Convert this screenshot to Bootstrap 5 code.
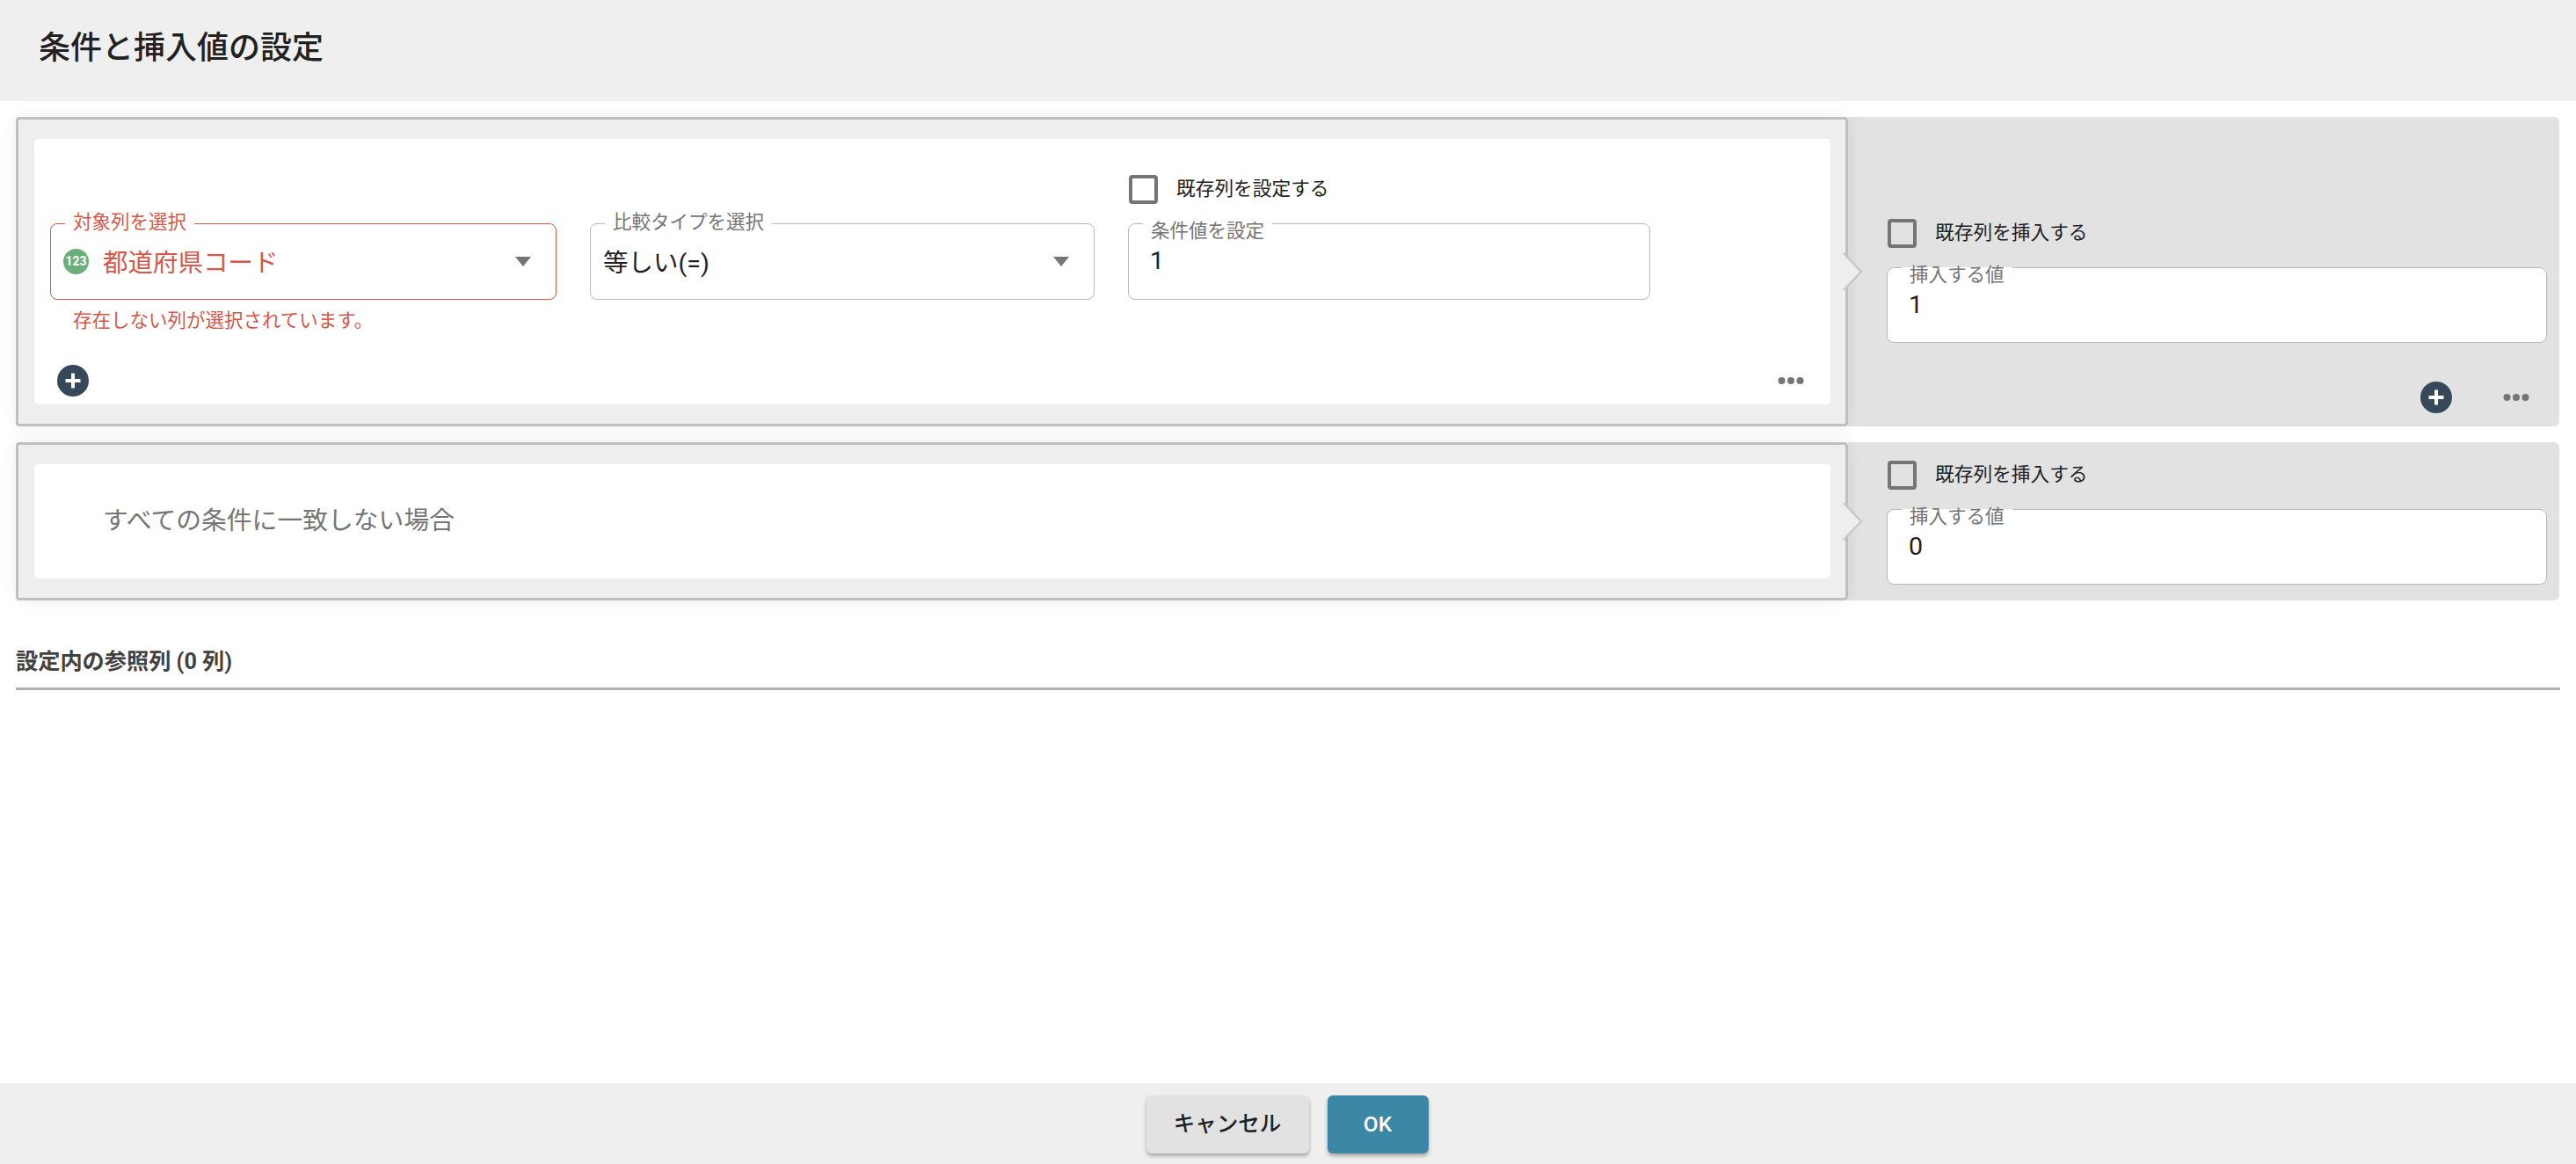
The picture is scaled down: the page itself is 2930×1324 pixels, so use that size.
<!DOCTYPE html>
<html lang="ja">
<head>
  <meta charset="UTF-8">
  <title>条件と挿入値の設定</title>
  <link href="https://cdn.jsdelivr.net/npm/bootstrap@5.3.2/dist/css/bootstrap.min.css" rel="stylesheet">
  <style>
    body {
      font-family: Roboto, "Noto Sans CJK JP", sans-serif;
      color: #212121;
      background: #fff;
    }
    .dlg-head {
      height: 115px;
      padding-left: 44px;
      background: #efefef;
    }
    .dlg-title {
      margin: -5px 0 0;
      font-size: 36px;
      font-weight: 500;
      line-height: 44px;
    }
    .dlg-body {
      padding: 18px 18px 0;
    }
    .rule-row {
      margin-bottom: 18px;
      margin-right: 1px;
    }
    .cond-box {
      position: relative;
      flex: 0 0 2084px;
      padding: 22px 17px 22px 18px;
      background: #eee;
      border: 3px solid #bfbfbf;
      border-radius: 4px;
      box-shadow: 0 0 18px rgba(0, 0, 0, .08);
    }
    .cond-arrow {
      position: absolute;
      left: 100%;
      top: 50%;
      width: 24px;
      height: 44px;
      margin-left: -3px;
      margin-top: -22px;
    }
    .cond-inner {
      height: 100%;
      padding: 41px 30px 9px 18px;
      background: #fff;
      border-radius: 5px;
    }
    .cond-grid {
      display: grid;
      grid-template-columns: 576px 574px 594px;
      column-gap: 38px;
    }
    .chk-line {
      display: flex;
      align-items: center;
      gap: 21px;
      height: 33px;
      font-size: 21.7px;
    }
    .chk-box {
      flex: 0 0 33px;
      height: 33px;
      background: transparent;
      border: 4px solid #757575;
      border-radius: 4px;
    }
    .cond-grid .chk-line {
      grid-column: 3;
      margin-bottom: 22px;
      padding-left: 1px;
    }
    .fld {
      position: relative;
      height: 87px;
      padding: 0 24px;
      background: #fff;
      border: 1px solid #b8b8b8;
      border-radius: 8px;
      font-size: 28.5px;
    }
    .fld-val {
      line-height: 84px;
    }
    .fld-cap {
      position: absolute;
      left: 16px;
      top: -16px;
      padding: 0 9px;
      background: #fff;
      color: #757575;
      font-size: 21.5px;
      line-height: 28px;
    }
    .fld-cap-in {
      top: -1px;
      line-height: 17px;
    }
    .fld-err {
      border-color: #d4574a;
      color: #d4574a;
    }
    .fld-err .fld-cap {
      color: #d4574a;
    }
    .fld-sel {
      padding-left: 14px;
      padding-right: 28px;
    }
    .fld-text {
      padding-top: 5px;
    }
    .fld-caret {
      width: 18px;
      height: 11px;
    }
    .type-dot {
      flex: 0 0 29px;
      height: 29px;
      margin-right: 16px;
      border-radius: 50%;
      background: #6aaf7a;
      color: #fff;
      font-size: 14px;
      font-weight: 700;
      line-height: 29px;
      text-align: center;
    }
    .err-msg {
      grid-column: 1;
      margin: 10px 0 0 26px;
      height: 28px;
      color: #d4574a;
      font-size: 21.5px;
      line-height: 28px;
    }
    .cond-tools {
      margin-top: 36px;
      padding-left: 8px;
    }
    .round-add {
      display: block;
      flex: 0 0 36px;
      width: 36px;
      height: 36px;
    }
    .more-dots {
      display: block;
      width: 30px;
      height: 10px;
    }
    .else-text {
      padding-left: 60px;
      color: #757575;
      font-size: 28.8px;
    }
    .else-inner {
      height: 130px;
      padding-top: 0;
      padding-bottom: 0;
    }
    .val-box {
      flex: 1 1 auto;
      padding: 21px 14px 18px 44px;
      background: #e2e2e2;
      border-radius: 0 6px 6px 0;
    }
    .val-top {
      padding-top: 116px;
      padding-bottom: 15px;
    }
    .val-box .chk-line {
      height: 33px;
      padding-left: 1px;
      margin-bottom: 22px;
    }
    .val-box .fld {
      height: 86px;
    }
    .val-tools {
      margin-top: 44px;
      padding-right: 20px;
      gap: 58px;
    }
    .ref-head {
      margin-top: 53px;
      padding-bottom: 12px;
      border-bottom: 3px solid #b0b0b0;
      color: #424242;
      font-size: 25.2px;
      font-weight: 700;
      line-height: 34px;
    }
    .dlg-foot {
      height: 92px;
      padding: 14px 2px 0 0;
      gap: 21px;
      background: #efefef;
    }
    .btn.foot-btn {
      height: 66px;
      padding: 0;
      border: 0;
      border-radius: 6px;
      font-size: 24.5px;
      font-weight: 500;
      box-shadow: 0 3px 4px rgba(0, 0, 0, .3);
    }
    .foot-cancel {
      width: 185px;
      background: #e2e2e2;
      color: #212121;
    }
    .foot-ok {
      width: 115px;
      background: #3b87a5;
      color: #fff;
    }
  </style>
</head>
<body>
  <div class="d-flex flex-column vh-100">

    <!-- Header -->
    <header class="dlg-head d-flex align-items-center">
      <h1 class="dlg-title">条件と挿入値の設定</h1>
    </header>

    <main class="dlg-body flex-grow-1">

      <!-- Condition row -->
      <div class="rule-row d-flex">
        <div class="cond-box">
          <div class="cond-inner">
            <div class="cond-grid">
              <div class="chk-line"><span class="chk-box"></span><span>既存列を設定する</span></div>
              <div class="fld fld-err fld-sel d-flex align-items-center">
                <span class="fld-cap">対象列を選択</span>
                <span class="type-dot">123</span>
                <span class="fld-text flex-grow-1">都道府県コード</span>
                <svg class="fld-caret" viewBox="0 0 18 11"><polygon points="0,0 18,0 9,11" fill="#757575"/></svg>
              </div>
              <div class="fld fld-sel d-flex align-items-center">
                <span class="fld-cap">比較タイプを選択</span>
                <span class="fld-text flex-grow-1">等しい(=)</span>
                <svg class="fld-caret" viewBox="0 0 18 11"><polygon points="0,0 18,0 9,11" fill="#757575"/></svg>
              </div>
              <div class="fld">
                <span class="fld-cap fld-cap-in">条件値を設定</span>
                <div class="fld-val">1</div>
              </div>
              <div class="err-msg">存在しない列が選択されています。</div>
            </div>
            <div class="cond-tools d-flex justify-content-between align-items-center">
              <svg class="round-add" viewBox="0 0 36 36"><circle cx="18" cy="18" r="18" fill="#35495a"/><path d="M18 9.5v17M9.5 18h17" stroke="#fff" stroke-width="4"/></svg>
              <svg class="more-dots" viewBox="0 0 30 10"><circle cx="4.5" cy="5" r="4" fill="#757575"/><circle cx="15" cy="5" r="4" fill="#757575"/><circle cx="25.5" cy="5" r="4" fill="#757575"/></svg>
            </div>
          </div>
          <svg class="cond-arrow" viewBox="0 0 24 44"><polygon points="0,2 21,22 0,42" fill="#eee"/><path d="M1 1L21 22L1 43" fill="none" stroke="#c8c8c8" stroke-width="2.5"/></svg>
        </div>
        <div class="val-box val-top">
          <div class="chk-line"><span class="chk-box"></span><span>既存列を挿入する</span></div>
          <div class="fld">
            <span class="fld-cap fld-cap-in">挿入する値</span>
            <div class="fld-val">1</div>
          </div>
          <div class="val-tools d-flex justify-content-end align-items-center">
            <svg class="round-add" viewBox="0 0 36 36"><circle cx="18" cy="18" r="18" fill="#35495a"/><path d="M18 9.5v17M9.5 18h17" stroke="#fff" stroke-width="4"/></svg>
            <svg class="more-dots" viewBox="0 0 30 10"><circle cx="4.5" cy="5" r="4" fill="#757575"/><circle cx="15" cy="5" r="4" fill="#757575"/><circle cx="25.5" cy="5" r="4" fill="#757575"/></svg>
          </div>
        </div>
      </div>

      <!-- Else row -->
      <div class="rule-row d-flex mb-0">
        <div class="cond-box">
          <div class="cond-inner else-inner d-flex align-items-center">
            <div class="else-text">すべての条件に一致しない場合</div>
          </div>
          <svg class="cond-arrow" viewBox="0 0 24 44"><polygon points="0,2 21,22 0,42" fill="#eee"/><path d="M1 1L21 22L1 43" fill="none" stroke="#c8c8c8" stroke-width="2.5"/></svg>
        </div>
        <div class="val-box">
          <div class="chk-line"><span class="chk-box"></span><span>既存列を挿入する</span></div>
          <div class="fld">
            <span class="fld-cap fld-cap-in">挿入する値</span>
            <div class="fld-val">0</div>
          </div>
        </div>
      </div>

      <div class="ref-head">設定内の参照列 (0 列)</div>
    </main>

    <footer class="dlg-foot d-flex justify-content-center align-items-start">
      <button type="button" class="btn foot-btn foot-cancel">キャンセル</button>
      <button type="button" class="btn foot-btn foot-ok">OK</button>
    </footer>
  </div>
  <script src="https://cdn.jsdelivr.net/npm/bootstrap@5.3.2/dist/js/bootstrap.bundle.min.js"></script>
</body>
</html>
